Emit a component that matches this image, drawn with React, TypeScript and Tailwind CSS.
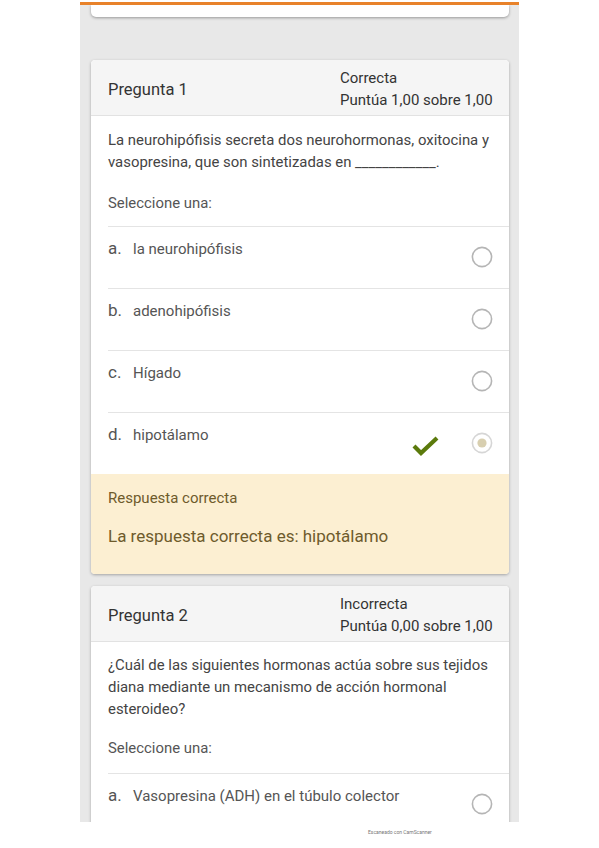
import React from "react";

function Radio({ checked = false }: { checked?: boolean }) {
  return (
    <svg width="22" height="22" viewBox="0 0 22 22" className="shrink-0">
      <circle cx="11" cy="11" r="9.6" fill="white" stroke={checked ? "#d6d6d6" : "#b5b5b5"} strokeWidth="1.6" />
      {checked && <circle cx="11" cy="11" r="4.6" fill="#d8cfb0" />}
    </svg>
  );
}

function Check() {
  return (
    <svg width="30" height="22" viewBox="0 0 30 22" className="shrink-0">
      <polyline points="3,11 10,18 26,3" fill="none" stroke="#5b7a0c" strokeWidth="4.2" strokeLinecap="butt" strokeLinejoin="miter" />
    </svg>
  );
}

function Option({ letter, text, checked = false, correct = false }: { letter: string; text: string; checked?: boolean; correct?: boolean }) {
  return (
    <div className="ml-[17px] h-[62px] border-t border-[#e4e4e4] flex items-center relative">
      <div className="absolute left-0 top-[9px] flex items-baseline text-[#555]">
        <span className="w-[25px] text-[17px] leading-[24px]">{letter}</span>
        <span className="text-[15px] leading-[24px]">{text}</span>
      </div>
      <div className="ml-auto flex items-center mr-[16px] mt-[-2px]">
        {correct && <div className="mr-[30px] relative top-[3px]"><Check /></div>}
        <Radio checked={checked} />
      </div>
    </div>
  );
}

function Header({ title, state, score }: { title: string; state: string; score: string }) {
  return (
    <div className="h-[56px] bg-[#f5f5f5] border-b border-[#e2e2e2] flex items-center rounded-t-[4px]">
      <div className="w-[249px] pl-[17px] pt-[6px] text-[16.5px] text-[#333]">{title}</div>
      <div className="text-[15px] leading-[22px] text-[#333] pt-[3px]">
        <div>{state}</div>
        <div>{score}</div>
      </div>
    </div>
  );
}

export default function App() {
  return (
    <div className="w-[599px] h-[848px] bg-white relative" style={{ fontFamily: "Roboto, 'Liberation Sans', sans-serif" }}>
      <div className="ml-[80px] w-[439px] h-[822px] pt-[2px] overflow-hidden">
        <div className="h-[3px] bg-[#e8822a]" />
        <div className="h-[817px] bg-[#e8e8e8] px-[11px] pr-[10px] overflow-hidden">
          <div className="h-[12px] bg-white rounded-b-[5px] shadow-[0_1px_3px_rgba(0,0,0,0.35)]" />

          <div className="mt-[43px] bg-white rounded-[4px] shadow-[0_1px_3px_rgba(0,0,0,0.3)] overflow-hidden">
            <Header title="Pregunta 1" state="Correcta" score="Puntúa 1,00 sobre 1,00" />
            <div className="px-[17px] pt-[13px] text-[14.9px] leading-[22px] text-[#444]">
              <p>La neurohipófisis secreta dos neurohormonas, oxitocina y vasopresina, que son sintetizadas en ____________.</p>
              <p className="mt-[19px] mb-[12px] text-[#555]">Seleccione una:</p>
            </div>
            <Option letter="a." text="la neurohipófisis" />
            <Option letter="b." text="adenohipófisis" />
            <Option letter="c." text="Hígado" />
            <Option letter="d." text="hipotálamo" checked correct />
            <div className="h-[100px] bg-[#fcefd2] px-[17px] pt-[13px] text-[#6e5b2c]">
              <div className="text-[15px] leading-[22px]">Respuesta correcta</div>
              <div className="mt-[15px] text-[17px] leading-[24px]">La respuesta correcta es: hipotálamo</div>
            </div>
          </div>

          <div className="mt-[12px] bg-white rounded-[4px] shadow-[0_1px_3px_rgba(0,0,0,0.3)]">
            <Header title="Pregunta 2" state="Incorrecta" score="Puntúa 0,00 sobre 1,00" />
            <div className="px-[17px] pt-[12px] text-[14.9px] leading-[22px] text-[#444]">
              <p>¿Cuál de las siguientes hormonas actúa sobre sus tejidos diana mediante un mecanismo de acción hormonal esteroideo?</p>
              <p className="mt-[17px] mb-[14px] text-[#555]">Seleccione una:</p>
            </div>
            <Option letter="a." text="Vasopresina (ADH) en el túbulo colector" />
          </div>
        </div>
      </div>
      <div className="absolute left-[368px] top-[829px] text-[5px] leading-[6px] text-[#777] whitespace-nowrap">Escaneado con CamScanner</div>
    </div>
  );
}
